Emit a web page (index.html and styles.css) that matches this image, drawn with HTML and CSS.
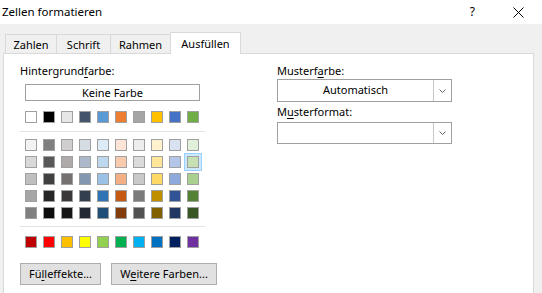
FILE: index.html
```html
<!DOCTYPE html>
<html lang="de">
<head>
<meta charset="utf-8">
<title>Zellen formatieren</title>
<link rel="stylesheet" href="styles.css">
</head>
<body>
<div class="window">
  <div class="titlebar">
    <span class="title">Zellen formatieren</span>
    <div class="controls">
      <span class="help">?</span>
      <svg class="close" width="11" height="11" viewBox="0 0 11 11"><path d="M0.5 0.5 L10.5 10.5 M10.5 0.5 L0.5 10.5" stroke="#000" stroke-width="1" fill="none"/></svg>
    </div>
  </div>
  <div class="body">
    <div class="tabs">
      <div class="tab t1">Zahlen</div>
      <div class="tab t2">Schrift</div>
      <div class="tab t3">Rahmen</div>
      <div class="tab t4 active">Ausfüllen</div>
    </div>
    <div class="panel">
      <div class="left">
        <div class="label">Hintergrund<u>f</u>arbe:</div>
        <div class="nofill">Keine Farbe</div>
        <div class="srow first">
          <span class="sw" style="background:#FFFFFF"></span>
          <span class="sw" style="background:#000000"></span>
          <span class="sw" style="background:#E7E6E6"></span>
          <span class="sw" style="background:#44546A"></span>
          <span class="sw" style="background:#5B9BD5"></span>
          <span class="sw" style="background:#ED7D31"></span>
          <span class="sw" style="background:#A5A5A5"></span>
          <span class="sw" style="background:#FFC000"></span>
          <span class="sw" style="background:#4472C4"></span>
          <span class="sw" style="background:#70AD47"></span>
        </div>
        <div class="sep s1"></div>
        <div class="grid">
          <div class="srow">
            <span class="sw" style="background:#F2F2F2"></span>
            <span class="sw" style="background:#7F7F7F"></span>
            <span class="sw" style="background:#D0CECE"></span>
            <span class="sw" style="background:#D6DCE4"></span>
            <span class="sw" style="background:#DDEBF7"></span>
            <span class="sw" style="background:#FCE4D6"></span>
            <span class="sw" style="background:#EDEDED"></span>
            <span class="sw" style="background:#FFF2CC"></span>
            <span class="sw" style="background:#D9E1F2"></span>
            <span class="sw" style="background:#E2EFDA"></span>
          </div>
          <div class="srow">
            <span class="sw" style="background:#D9D9D9"></span>
            <span class="sw" style="background:#595959"></span>
            <span class="sw" style="background:#AEAAAA"></span>
            <span class="sw" style="background:#ACB9CA"></span>
            <span class="sw" style="background:#BDD7EE"></span>
            <span class="sw" style="background:#F8CBAD"></span>
            <span class="sw" style="background:#DBDBDB"></span>
            <span class="sw" style="background:#FFE699"></span>
            <span class="sw" style="background:#B4C6E7"></span>
            <span class="sw selected" style="background:#C6E0B4"></span>
          </div>
          <div class="srow">
            <span class="sw" style="background:#BFBFBF"></span>
            <span class="sw" style="background:#404040"></span>
            <span class="sw" style="background:#757171"></span>
            <span class="sw" style="background:#8497B0"></span>
            <span class="sw" style="background:#9BC2E6"></span>
            <span class="sw" style="background:#F4B084"></span>
            <span class="sw" style="background:#C9C9C9"></span>
            <span class="sw" style="background:#FFD966"></span>
            <span class="sw" style="background:#8EA9DB"></span>
            <span class="sw" style="background:#A9D08E"></span>
          </div>
          <div class="srow">
            <span class="sw" style="background:#A6A6A6"></span>
            <span class="sw" style="background:#262626"></span>
            <span class="sw" style="background:#3A3838"></span>
            <span class="sw" style="background:#333F4F"></span>
            <span class="sw" style="background:#2F75B5"></span>
            <span class="sw" style="background:#C65911"></span>
            <span class="sw" style="background:#7B7B7B"></span>
            <span class="sw" style="background:#BF8F00"></span>
            <span class="sw" style="background:#305496"></span>
            <span class="sw" style="background:#548235"></span>
          </div>
          <div class="srow">
            <span class="sw" style="background:#808080"></span>
            <span class="sw" style="background:#0D0D0D"></span>
            <span class="sw" style="background:#161616"></span>
            <span class="sw" style="background:#222B35"></span>
            <span class="sw" style="background:#1F4E78"></span>
            <span class="sw" style="background:#833C0C"></span>
            <span class="sw" style="background:#525252"></span>
            <span class="sw" style="background:#806000"></span>
            <span class="sw" style="background:#203764"></span>
            <span class="sw" style="background:#375623"></span>
          </div>
        </div>
        <div class="sep s2"></div>
        <div class="srow std">
          <span class="sw" style="background:#C00000"></span>
          <span class="sw" style="background:#FF0000"></span>
          <span class="sw" style="background:#FFC000"></span>
          <span class="sw" style="background:#FFFF00"></span>
          <span class="sw" style="background:#92D050"></span>
          <span class="sw" style="background:#00B050"></span>
          <span class="sw" style="background:#00B0F0"></span>
          <span class="sw" style="background:#0070C0"></span>
          <span class="sw" style="background:#002060"></span>
          <span class="sw" style="background:#7030A0"></span>
        </div>
        <div class="buttons">
          <button class="btn b1">Fü<u>l</u>leffekte...</button>
          <button class="btn b2">W<u>e</u>itere Farben...</button>
        </div>
      </div>
      <div class="right">
        <div class="label">Musterf<u>a</u>rbe:</div>
        <div class="combo c1">
          <span class="value">Automatisch</span>
          <span class="arrow"><svg width="7" height="4" viewBox="0 0 7 4"><path d="M0.5 0.5 L3.5 3.5 L6.5 0.5" stroke="#606060" stroke-width="1" fill="none"/></svg></span>
        </div>
        <div class="label l2">M<u>u</u>sterformat:</div>
        <div class="combo c2">
          <span class="value"></span>
          <span class="arrow"><svg width="7" height="4" viewBox="0 0 7 4"><path d="M0.5 0.5 L3.5 3.5 L6.5 0.5" stroke="#606060" stroke-width="1" fill="none"/></svg></span>
        </div>
      </div>
    </div>
  </div>
</div>
</body>
</html>
```
FILE: styles.css
```css
html, body {
  margin: 0;
  padding: 0;
  width: 542px;
  height: 293px;
  overflow: hidden;
  background: #f0f0f0;
}
body {
  font-family: "Noto Sans", "Open Sans", sans-serif;
  font-size: 11px;
  color: #000;
}
u { text-decoration: underline; text-underline-offset: 2px; }

.window {
  display: flex;
  flex-direction: column;
  height: 293px;
}
.titlebar {
  height: 24px;
  background: #fff;
  display: flex;
  align-items: center;
  justify-content: space-between;
}
.title {
  padding-left: 2px;
  font-size: 11.5px;
  line-height: 16px;
}
.controls {
  display: flex;
  align-items: center;
  padding-right: 18px;
}
.help {
  font-size: 12px;
  margin-right: 38px;
  line-height: 16px;
}
.close { display: block; }

.body {
  flex: 1;
  background: #f0f0f0;
  padding: 8px 0 0 3px;
  display: flex;
  flex-direction: column;
}
.tabs {
  display: flex;
  align-items: flex-end;
  padding-left: 2px;
  height: 21px;
  position: relative;
  z-index: 1;
}
.tab {
  height: 19px;
  box-sizing: border-box;
  border: 1px solid #d9d9d9;
  border-bottom: none;
  background: #f0f0f0;
  display: flex;
  align-items: center;
  justify-content: center;
  line-height: 16px;
  padding-top: 1px;
}
.t1 { width: 52px; }
.t2 { width: 55px; margin-left: -1px; }
.t3 { width: 61px; margin-left: -1px; }
.t4 { width: 71px; margin-left: -1px; }
.tab.active {
  height: 22px;
  background: #fff;
  margin-bottom: -1px;
  padding-top: 0;
}
.panel {
  width: 531px;
  flex: 1;
  box-sizing: border-box;
  background: #fff;
  border: 1px solid #d9d9d9;
  border-bottom: none;
  padding: 9px 0 0 16px;
  display: flex;
}
.left {
  width: 185px;
  flex-shrink: 0;
  display: flex;
  flex-direction: column;
}
.label {
  line-height: 16px;
  white-space: nowrap;
}
.nofill {
  margin: 5px 0 0 5px;
  width: 175px;
  height: 17px;
  box-sizing: border-box;
  border: 1px solid #a0a0a0;
  text-align: center;
  line-height: 15px;
}
.srow {
  display: flex;
  gap: 6px;
  margin-left: 5px;
}
.srow.first { margin-top: 10px; }
.sw {
  width: 12px;
  height: 12px;
  flex-shrink: 0;
  box-sizing: border-box;
  border: 1px solid #a0a0a0;
  display: block;
}
.sw.selected {
  box-shadow: 0 0 0 2px #cce8ff, 0 0 0 3px #99d1ff;
}
.sep {
  height: 1px;
  width: 185px;
  background: #e3e3e3;
}
.s1 { margin-top: 8px; }
.grid {
  margin-top: 7px;
  display: flex;
  flex-direction: column;
  gap: 5px;
}
.s2 { margin-top: 7px; }
.srow.std { margin-top: 9px; }
.buttons {
  margin-top: 15px;
  display: flex;
  gap: 10px;
  width: 220px;
}
.btn {
  flex-shrink: 0;
  height: 22px;
  box-sizing: border-box;
  border: 1px solid #adadad;
  background: #e1e1e1;
  font-family: inherit;
  font-size: 11px;
  color: #000;
  padding: 0;
  line-height: 18px;
}
.b1 { width: 81px; }
.b2 { width: 106px; }

.right {
  margin-left: 72px;
  display: flex;
  flex-direction: column;
}
.combo {
  width: 175px;
  height: 23px;
  box-sizing: border-box;
  border: 1px solid #a0a0a0;
  display: flex;
  background: #fff;
}
.c2 { height: 22px; margin-top: 2px; }
.l2 { margin-top: 2px; }
.value {
  flex: 1;
  text-align: center;
  line-height: 20px;
}
.arrow {
  width: 17px;
  border-left: 1px solid #c8c8c8;
  display: flex;
  align-items: center;
  justify-content: center;
}
.arrow svg { display: block; }
```
